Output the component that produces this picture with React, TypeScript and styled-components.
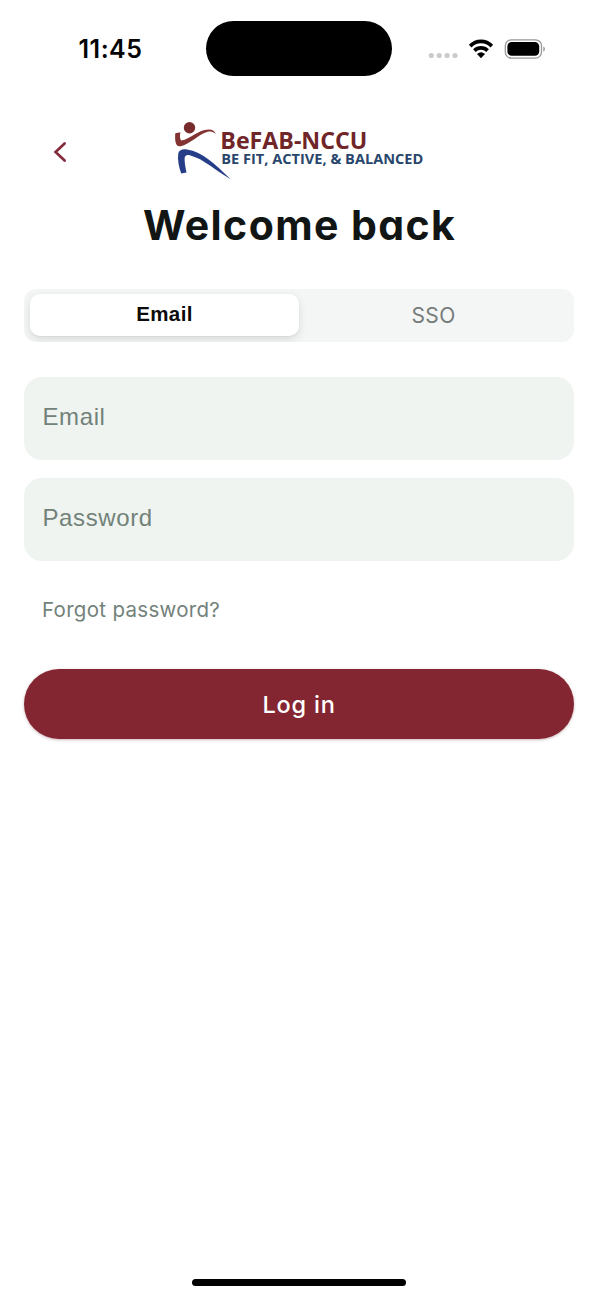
import React from "react";
import styled, { createGlobalStyle } from "styled-components";

const GlobalStyle = createGlobalStyle`
  *, *::before, *::after { box-sizing: border-box; }
  body { margin: 0; background: #fff; }
  button, input { border: 0; margin: 0; padding: 0; background: none; font: inherit; color: inherit; }
`;

const Screen = styled.main`
  display: flex;
  flex-direction: column;
  width: 598px;
  height: 1299px;
  background: #fff;
  overflow: hidden;
  font-family: "Liberation Sans", Helvetica, sans-serif;
`;

const StatusBar = styled.header`
  display: grid;
  grid-template-columns: 206px 186px 1fr;
  padding-top: 21px;
  height: 76px;
`;

const Clock = styled.time`
  padding-left: 78.5px;
  font: 600 25px/56px Inter, sans-serif;
  letter-spacing: 0.5px;
  color: #050505;
`;

const Island = styled.div`
  height: 55px;
  border-radius: 28px;
  background: #000;
`;

const StatusIcons = styled.div`
  display: flex;
  height: 55px;
  align-items: center;
  padding-left: 36px;
`;

const Brand = styled.div`
  display: flex;
  height: 109px;
  padding: 44px 0 0 50px;
`;

const BackButton = styled.button`
  display: flex;
  width: 20px;
  height: 64px;
  align-items: center;
  justify-content: center;
`;

const Logo = styled.svg`
  margin-left: 100px;
`;

const Title = styled.h1`
  margin: 15px 0 0;
  height: 50px;
  text-align: center;
  font: 750 41px/50px Inter, sans-serif;
  font-feature-settings: "cv11";
  letter-spacing: 1.4px;
  text-indent: 1px;
  color: #111514;
`;

const Form = styled.form`
  display: flex;
  flex-direction: column;
  padding: 0 24px;
  margin-top: 39px;
`;

const Tabs = styled.div`
  display: grid;
  grid-template-columns: 269px 1fr;
  height: 53px;
  padding: 5px 6px 6px;
  border-radius: 12px;
  background: #f4f6f5;
  overflow: hidden;
`;

const Tab = styled.button<{ $active?: boolean }>`
  height: 42px;
  border-radius: 10px;
  background: ${(p) => (p.$active ? "#fff" : "transparent")};
  box-shadow: ${(p) => (p.$active ? "0 3px 8px rgba(0,0,0,.12), 0 1px 1px rgba(0,0,0,.03)" : "none")};
  color: ${(p) => (p.$active ? "#0b0b0b" : "#747b78")};
  padding: ${(p) => (p.$active ? "0 0 2px" : "2px 0 0")};
  font: ${(p) =>
    p.$active
      ? '700 20.5px/40px "Liberation Sans", sans-serif'
      : '400 21px/40px Inter, sans-serif'};
  letter-spacing: 0.4px;
`;

const Fields = styled.div`
  display: grid;
  gap: 18px;
  margin-top: 35.4px;
`;

const Field = styled.input`
  width: 100%;
  height: 83px;
  padding: 0 18px 3px 18.5px;
  border-radius: 18px;
  background: #eff4f1;
  font-size: 24px;
  letter-spacing: 0.6px;
  outline: 0;
  &::placeholder { color: #728279; opacity: 1; }
`;

const Forgot = styled.button`
  align-self: flex-start;
  height: 30px;
  margin: 33.6px 0 0 18px;
  font: 400 20.5px/30px Inter, sans-serif;
  letter-spacing: 0.3px;
  color: #73827b;
`;

const LoginButton = styled.button`
  height: 70px;
  margin-top: 44.4px;
  padding-top: 1px;
  border-radius: 35px;
  background: #842632;
  box-shadow: 0 1px 3px rgba(90, 20, 35, 0.3);
  color: #fff;
  font: 500 23.5px/68px Inter, sans-serif;
  letter-spacing: 0.8px;
`;

const HomeIndicator = styled.div`
  width: 214px;
  height: 7px;
  margin: auto auto 12.6px 192px;
  border-radius: 4px;
  background: #000;
`;

function SignalIcons() {
  return (
    <svg width="120" height="30" viewBox="428 33.5 120 30" aria-hidden="true">
      <g fill="#cbcbcb">
        {[431.3, 439.2, 447.1, 455].map((x) => <circle key={x} cx={x} cy="55" r="2.6" />)}
      </g>
      <g fill="none" stroke="#000" strokeWidth="3.7">
        <path d="M470.2 45.6C476.2 39.4 485.8 39.4 491.8 45.6" />
        <path d="M474.4 50.1C478.1 46.5 483.9 46.5 487.6 50.1" />
      </g>
      <path d="M477.3 53.5q3.7-2.8 7.4 0L481 57.4Z" fill="#000" stroke="#000" strokeWidth=".5" strokeLinejoin="round" />
      <rect x="505.3" y="39.3" width="36.2" height="18.3" rx="6" fill="#fff" stroke="#999" strokeWidth="1.3" />
      <rect x="507.4" y="41.5" width="31.8" height="13.8" rx="4.3" fill="#000" />
      <path d="M543.3 45.7q1.7 1 1.7 2.8t-1.7 2.8Z" fill="#999" />
    </svg>
  );
}

function BrandLogo() {
  return (
    <Logo width="258" height="64" viewBox="170 120 258 64" role="img" aria-label="BeFAB-NCCU">
      <circle cx="189.5" cy="127.7" r="5.7" fill="#782b2c" />
      <path d="M175.3 133.2L180.4 132.2C179.5 136 179.9 139.1 181.3 140.5C190 139 198.5 129.5 208.5 129.4C212.5 129.3 215 131.2 215.8 134.3C213.5 131.5 210.5 131.1 207 132C198 134.5 190 144.5 180.5 146.2C176 147.1 174.5 142 175.3 133.2Z" fill="#843333" />
      <path d="M181.2 173.6C178.6 166.5 177.5 159.3 178.2 154C178.8 150.1 182 148.8 187 149.5C202.5 151.8 215.5 164.8 230.8 179.3C215 170.1 203.5 158.8 190.5 155.4C186.8 154.4 184.7 155.2 184.6 158.8C184.5 163.2 185.6 168 186.5 172.6Z" fill="#263e88" />
      <g fontFamily="Open Sans, Noto Sans, sans-serif" fontWeight="700">
        <text x="220.3" y="149" fontSize="22.6" textLength="147" lengthAdjust="spacingAndGlyphs" fill="#702528">BeFAB-NCCU</text>
        <text x="221.3" y="164" fontSize="13.6" textLength="202" lengthAdjust="spacingAndGlyphs" fill="#29466c">BE FIT, ACTIVE, &amp; BALANCED</text>
      </g>
    </Logo>
  );
}

export default function App() {
  return (
    <Screen>
      <GlobalStyle />
      <StatusBar>
        <Clock>11:45</Clock>
        <Island />
        <StatusIcons><SignalIcons /></StatusIcons>
      </StatusBar>
      <Brand>
        <BackButton type="button" aria-label="Back">
          <svg width="20" height="24" viewBox="50 140 20 24">
            <path d="M64.6 143.5L55.6 152L64.6 160.5" fill="none" stroke="#842b3c" strokeWidth="2.7" strokeLinecap="round" strokeLinejoin="miter" />
          </svg>
        </BackButton>
        <BrandLogo />
      </Brand>
      <Title>Welcome back</Title>
      <Form onSubmit={(e) => e.preventDefault()}>
        <Tabs>
          <Tab type="button" $active>Email</Tab>
          <Tab type="button">SSO</Tab>
        </Tabs>
        <Fields>
          <Field type="email" placeholder="Email" />
          <Field type="password" placeholder="Password" />
        </Fields>
        <Forgot type="button">Forgot password?</Forgot>
        <LoginButton type="submit">Log in</LoginButton>
      </Form>
      <HomeIndicator />
    </Screen>
  );
}
